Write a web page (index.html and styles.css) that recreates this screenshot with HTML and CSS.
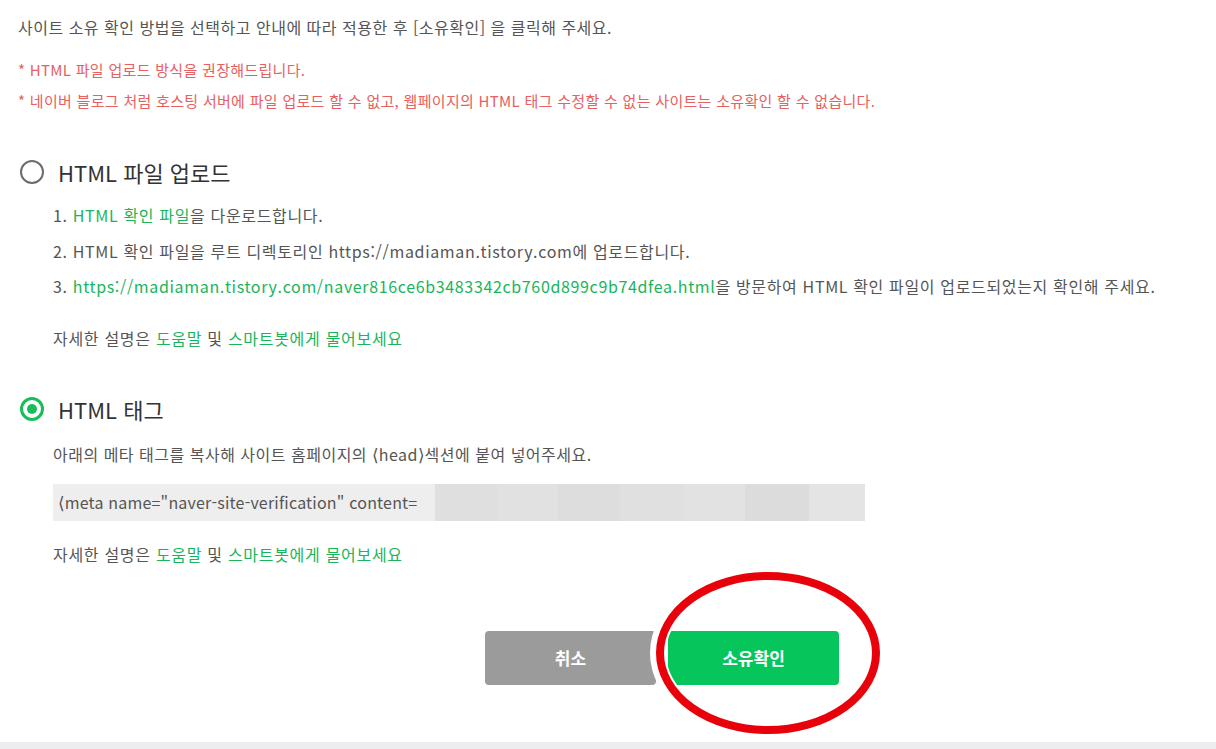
FILE: index.html
```html
<!DOCTYPE html>
<html lang="ko">
<head>
    <meta charset="UTF-8">
    <title>사이트 소유 확인</title>
    <link rel="stylesheet" href="styles.css">
</head>
<body>
<div class="page">
    <p class="intro">사이트 소유 확인 방법을 선택하고 안내에 따라 적용한 후 [소유확인] 을 클릭해 주세요.</p>
    <p class="warn first">* HTML 파일 업로드 방식을 권장해드립니다.</p>
    <p class="warn">* 네이버 블로그 처럼 호스팅 서버에 파일 업로드 할 수 없고, 웹페이지의 HTML 태그 수정할 수 없는 사이트는 소유확인 할 수 없습니다.</p>

    <!-- HTML 파일 업로드 -->
    <div class="radio upload">
        <span class="dot"></span>
        <span class="label">HTML 파일 업로드</span>
    </div>
    <ol class="steps">
        <li>1. <a href="#">HTML 확인 파일</a>을 다운로드합니다.</li>
        <li>2. HTML 확인 파일을 루트 디렉토리인 https://madiaman.tistory.com에 업로드합니다.</li>
        <li>3. <a href="#">https://madiaman.tistory.com/naver816ce6b3483342cb760d899c9b74dfea.html</a>을 방문하여 HTML 확인 파일이 업로드되었는지 확인해 주세요.</li>
    </ol>
    <p class="help">자세한 설명은 <a href="#">도움말</a> 및 <a href="#">스마트봇에게 물어보세요</a></p>

    <!-- HTML 태그 -->
    <div class="radio tag">
        <span class="dot on"></span>
        <span class="label">HTML 태그</span>
    </div>
    <p class="desc">아래의 메타 태그를 복사해 사이트 홈페이지의 <span class="br">⟨</span>head<span class="br">⟩</span>섹션에 붙여 넣어주세요.</p>
    <div class="code">
        <span class="code-text"><span class="br">⟨</span>meta name="naver-site-verification" content=</span>
        <span class="hide h1"></span><span class="hide h2"></span><span class="hide h3"></span><span class="hide h4"></span><span class="hide h5"></span><span class="hide h6"></span><span class="hide h7"></span>
    </div>
    <p class="help second">자세한 설명은 <a href="#">도움말</a> 및 <a href="#">스마트봇에게 물어보세요</a></p>

    <div class="actions">
        <button class="btn cancel">취소</button>
        <button class="btn ok">소유확인</button>
        <svg class="circle" width="240" height="184" viewBox="0 0 240 184">
            <ellipse cx="120" cy="90" rx="110" ry="79" fill="none" stroke="#fff" stroke-width="16"/>
            <ellipse cx="120" cy="90" rx="108" ry="77" fill="none" stroke="#e8000b" stroke-width="8"/>
        </svg>
    </div>
</div>
<div class="bottom"></div>
</body>
</html>
```

FILE: styles.css
```css
*{
    margin: 0;
    padding: 0;
}
body{
    background: #fff;
    font-family: "Noto Sans CJK KR", "Noto Sans", sans-serif;
    color: #555;
}
a{
    color: #19b55a;
    text-decoration: none;
}
.page{
    padding: 0 0 0 18px;
    height: 742px;
    box-sizing: border-box;
    overflow: hidden;
}
.intro{
    margin-top: 16px;
    line-height: 22px;
    font-size: 16px;
    letter-spacing: 0.5px;
}
.warn{
    margin-top: 11px;
    line-height: 20px;
    font-size: 15px;
    color: #e8605f;
    letter-spacing: 0.3px;
}
.warn.first{
    margin-top: 22px;
}
.radio{
    display: flex;
    align-items: center;
    height: 28px;
    margin-left: 2px;
}
.upload{
    margin-top: 47px;
}
.tag{
    margin-top: 45px;
}
.dot{
    width: 20px;
    height: 20px;
    border: 2px solid #6d6d6d;
    border-radius: 50%;
    box-sizing: content-box;
    position: relative;
}
.dot.on{
    border: 3px solid #19be5b;
    width: 18px;
    height: 18px;
}
.dot.on::after{
    content: "";
    position: absolute;
    left: 4px;
    top: 4px;
    width: 10px;
    height: 10px;
    border-radius: 50%;
    background: #19be5b;
}
.label{
    margin-left: 14px;
    font-size: 22px;
    color: #333;
}
.steps{
    list-style: none;
    margin-top: 12px;
    margin-left: 35px;
}
.steps li{
    line-height: 35.5px;
    font-size: 16px;
    letter-spacing: 0.65px;
    white-space: nowrap;
}
.help{
    margin-top: 21px;
    margin-left: 35px;
    line-height: 24px;
    font-size: 16px;
    letter-spacing: 0.7px;
}
.desc{
    margin-top: 19px;
    margin-left: 35px;
    line-height: 24px;
    font-size: 16px;
    letter-spacing: 0.5px;
}
.br{
    font-family: "DejaVu Sans", sans-serif;
    font-size: 17px;
    line-height: 0;
    letter-spacing: 0;
}
.code{
    margin-top: 18px;
    margin-left: 35px;
    width: 812px;
    height: 37px;
    background: #eee;
    display: flex;
    align-items: stretch;
}
.code-text{
    padding-left: 5px;
    line-height: 37px;
    font-size: 16px;
    color: #555;
    letter-spacing: 0.2px;
    white-space: nowrap;
    width: 378px;
}
.hide{
    height: 37px;
}
.h1{ width: 64px; background: #dfdfdf; }
.h2{ width: 60px; background: #e1e1e1; }
.h3{ width: 62px; background: #dddddd; }
.h4{ width: 64px; background: #e0e0e0; }
.h5{ width: 62px; background: #e2e2e2; }
.h6{ width: 64px; background: #dcdcdc; }
.h7{ width: 56px; background: #e4e4e4; }
.help.second{
    margin-top: 21px;
}
.actions{
    position: relative;
    display: flex;
    gap: 12px;
    margin-top: 65px;
    margin-left: 467px;
}
.btn{
    width: 171px;
    height: 54px;
    border: none;
    border-radius: 4px;
    color: #fff;
    font-family: "Noto Sans CJK KR", "Noto Sans", sans-serif;
    font-size: 17px;
    font-weight: bold;
}
.cancel{
    background: #9b9b9b;
}
.ok{
    background: #06c55a;
}
.circle{
    position: absolute;
    left: 163px;
    top: -68px;
}
.bottom{
    height: 7px;
    background: #ededf0;
}
```
